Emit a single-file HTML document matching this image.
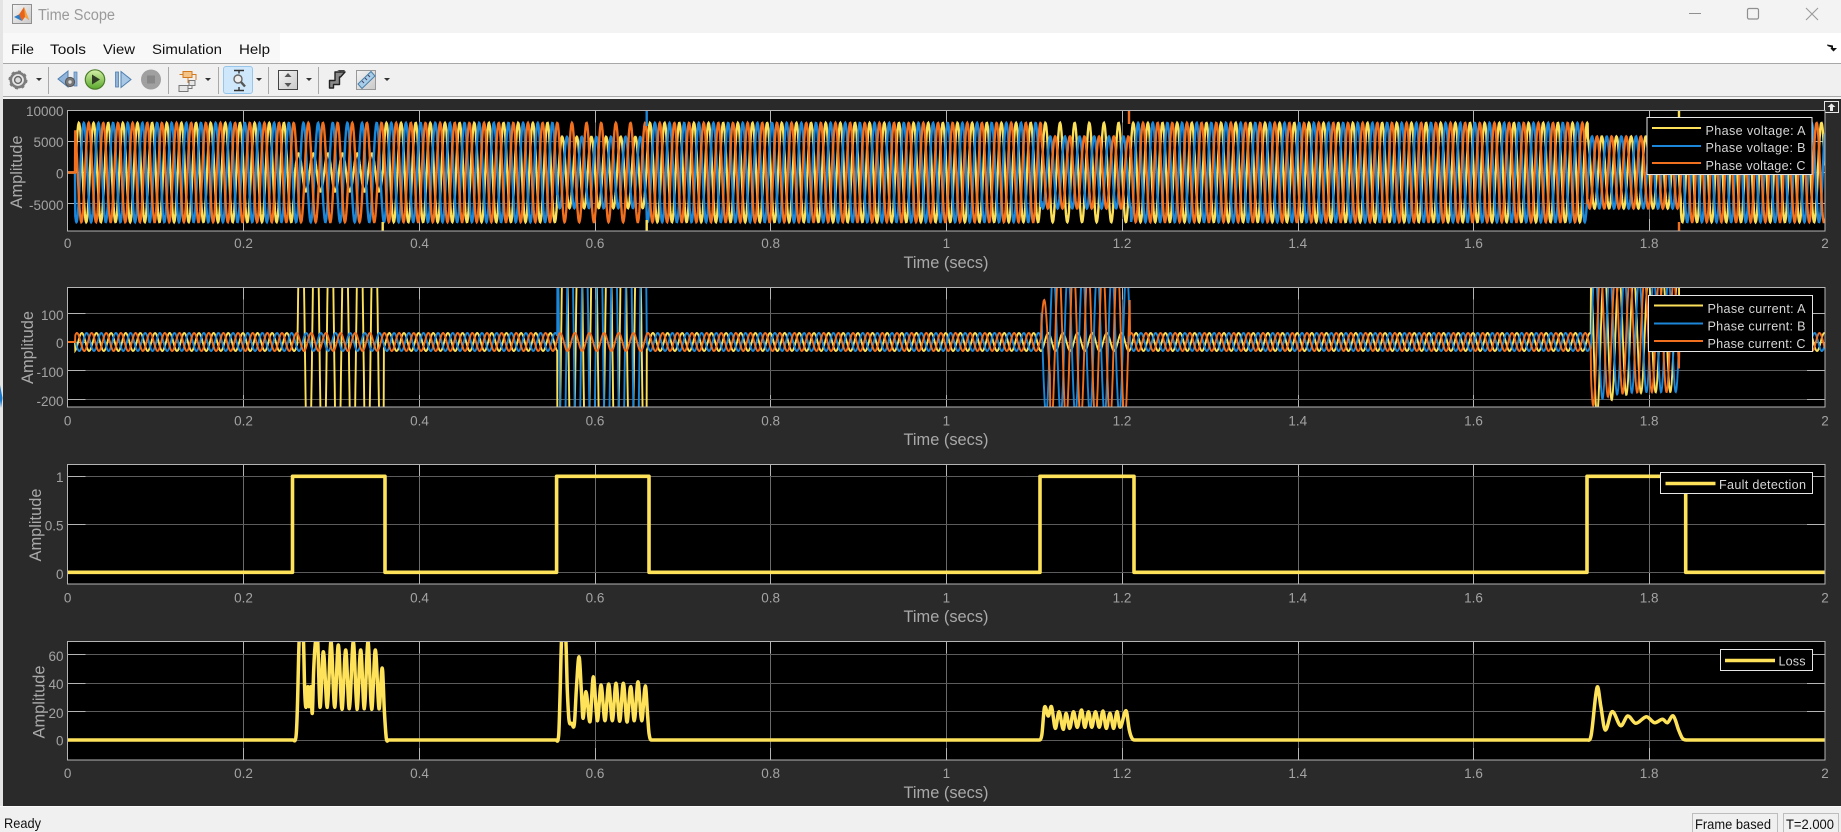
<!DOCTYPE html>
<html lang="en"><head><meta charset="utf-8"><title>Time Scope</title>
<style>
html,body{margin:0;padding:0;width:1841px;height:832px;overflow:hidden;background:#2a2a2a}
svg{display:block}
text{font-family:"Liberation Sans",Arial,sans-serif}
.t{fill:#a3a3a3;font-size:13.5px}
.e{text-anchor:end}.m{text-anchor:middle}
.l{fill:#a9a9a9;font-size:16.4px;text-anchor:middle}
.g{fill:#d6d6d6;font-size:12.6px}
.n{fill:#111;font-size:14px}
.b{filter:blur(.35px)}
</style></head><body>
<svg id="s" width="1841" height="832" viewBox="0 0 1841 832" xmlns="http://www.w3.org/2000/svg">
<defs>
<clipPath id="c1"><rect x="68" y="110" width="1757" height="121"/></clipPath>
<clipPath id="c2"><rect x="68" y="287" width="1757" height="120"/></clipPath>
<clipPath id="c3"><rect x="68" y="464" width="1757" height="120"/></clipPath>
<clipPath id="c4"><rect x="68" y="641" width="1757" height="119"/></clipPath>
<linearGradient id="gr" x1="0" y1="0" x2="0" y2="1"><stop offset="0" stop-color="#d6f0a8"/><stop offset="1" stop-color="#58a82a"/></linearGradient>
<linearGradient id="gi" x1="0" y1="0" x2="1" y2="1"><stop offset="0" stop-color="#f4f4f4"/><stop offset="1" stop-color="#c9c9c9"/></linearGradient>
</defs>

<!-- chrome -->
<rect width="1841" height="832" fill="#2a2a2a"/>
<rect width="1841" height="33" fill="#f3f3f3"/>
<rect y="33" width="1841" height="30" fill="#fff"/>
<rect y="33" width="280" height="30" fill="#f8f8f8"/>
<rect y="63" width="1841" height="1" fill="#a8a8a8"/>
<rect y="64" width="1841" height="32" fill="#f0f0f0"/>
<rect y="96" width="1841" height="1" fill="#a8a8a8"/>
<rect y="97" width="1841" height="2" fill="#f5f5f5"/>
<rect x="0" y="0" width="3" height="832" fill="#e4e4e4"/>
<path d="M0 385 L2.5 398 L1 408 L0 400Z" fill="#1c78c8"/>
<rect y="807" width="1841" height="25" fill="#f0f0f0"/>
<rect y="806" width="1841" height="1" fill="#fafafa"/>

<!-- matlab icon -->
<rect x="12.5" y="4.5" width="19" height="19" fill="url(#gi)" stroke="#8f8f8f"/>
<path d="M14 17 L19 14.5 L24 7 L29 20 L25 17 L22 21 L19 15.5Z" fill="#e8641c"/>
<path d="M14 17 L19 14.5 L22 21Z" fill="#2f7fc8"/>
<path d="M24 7 L29 20 L25 17Z" fill="#f5a33a"/>
<text x="38" y="20" font-size="15.4" fill="#9a9a9a" textLength="77" lengthAdjust="spacingAndGlyphs">Time Scope</text>

<!-- window controls -->
<rect x="1689" y="13" width="12" height="1" fill="#909090"/>
<rect x="1747.5" y="8.5" width="11" height="10.5" rx="1.5" fill="none" stroke="#8f8f8f" stroke-width="1.2"/>
<path d="M1806 8 L1818 20 M1818 8 L1806 20" stroke="#9a9a9a" stroke-width="1.1"/>

<!-- menu -->
<text class="n" x="11" y="54" textLength="23" lengthAdjust="spacingAndGlyphs">File</text>
<text class="n" x="50" y="54" textLength="36" lengthAdjust="spacingAndGlyphs">Tools</text>
<text class="n" x="103" y="54" textLength="32" lengthAdjust="spacingAndGlyphs">View</text>
<text class="n" x="152" y="54" textLength="70" lengthAdjust="spacingAndGlyphs">Simulation</text>
<text class="n" x="239" y="54" textLength="31" lengthAdjust="spacingAndGlyphs">Help</text>
<path d="M1827 44.5 L1833 45.5 L1833 48 L1837 48 L1833.5 51.5 L1830.5 48.5 L1831.5 47.5 L1827.5 46Z" fill="#111"/>

<!-- toolbar separators -->
<path d="M48.5 67V94M168.5 67V94M218.5 67V94M268.5 67V94M318.5 67V94" stroke="#a9a9a9"/>
<!-- dropdown arrows -->
<path d="M36 78h6l-3 3zM205 78h6l-3 3zM256 78h6l-3 3zM306 78h6l-3 3zM384 78h6l-3 3z" fill="#333"/>
<!-- gear -->
<circle cx="18" cy="80" r="7.2" fill="#e6e6e6" stroke="#7c7c7c" stroke-width="2.6"/>
<circle cx="18" cy="80" r="8.6" fill="none" stroke="#7c7c7c" stroke-width="1.8" stroke-dasharray="3 3.7"/>
<circle cx="18" cy="80" r="3.4" fill="#dcdcdc" stroke="#666" stroke-width="1.4"/>
<!-- step back -->
<path d="M58 79 L68 71 L68 87Z" fill="#8fb3d9" stroke="#4f7fb0"/>
<rect x="74" y="72" width="3" height="14" fill="#8fb3d9" stroke="#4f7fb0" stroke-width=".7"/>
<circle cx="70" cy="82" r="4.6" fill="#777" stroke="#555"/><circle cx="70" cy="82" r="1.7" fill="#ddd"/>
<!-- play -->
<circle cx="95" cy="79.5" r="9.7" fill="url(#gr)" stroke="#4b7d2a" stroke-width="1.2"/>
<path d="M92 74.5 L100 79.5 L92 84.5Z" fill="#2f3d24"/>
<!-- step forward -->
<rect x="115.5" y="72" width="3" height="15" fill="#8fb3d9" stroke="#4f7fb0" stroke-width=".8"/>
<path d="M121 71.5 L131 79.5 L121 87.5Z" fill="#a9c8e6" stroke="#4f7fb0"/>
<!-- stop -->
<circle cx="151" cy="79.5" r="10" fill="#a0a0a0"/>
<rect x="147" y="75.5" width="8" height="8" fill="#888"/>
<!-- blocks -->
<rect x="183" y="71.5" width="9" height="6" fill="#f3c486" stroke="#d27a20"/>
<path d="M179.5 74.5H183M192 74.5H196V80M188 78V83" stroke="#d27a20" fill="none"/>
<rect x="189" y="80.5" width="6" height="5" fill="#e6e6e6" stroke="#777"/>
<rect x="179" y="85.5" width="9" height="6" fill="#e6e6e6" stroke="#777"/>
<path d="M188 88.5H192V85.5" stroke="#777" fill="none"/>
<!-- active zoom button -->
<rect x="223.5" y="66.5" width="29" height="27" rx="2.5" fill="#cfe7fa" stroke="#97c6ea"/>
<path d="M234 70.5h10M234 90.5h10M239 70.5v3M239 87v3" stroke="#333" stroke-width="1.4"/>
<circle cx="238" cy="79" r="4" fill="#eee" stroke="#666" stroke-width="1.4"/>
<path d="M241 82 L245 86.5" stroke="#555" stroke-width="2.4"/>
<!-- scale axes -->
<rect x="278.5" y="70.5" width="19" height="19" fill="url(#gi)" stroke="#444"/>
<path d="M288 73 L284.5 77H291.5ZM288 87 L284.5 83H291.5Z" fill="#555"/>
<!-- step icon -->
<path d="M329.5 88V80.5H335V72H345L340.5 77H339.5V84.5H333.5V88Z" fill="#8a8a8a" stroke="#222" stroke-width="1.4" stroke-linejoin="round"/>
<path d="M337 70L345 70L343 73Z" fill="#444"/>
<!-- ruler -->
<rect x="356.5" y="70.5" width="19" height="19" fill="url(#gi)" stroke="#999"/>
<path d="M358 84 L371 71.5 L375 76 L362 88.5Z" fill="#a8cde9" stroke="#4a7fa8"/>
<path d="M362 81l2 2M365 78l2 2M368 75l2 2" stroke="#446"/>

<!-- maximize-axes icon -->
<rect x="1824.5" y="101.5" width="14" height="11" fill="#2a2a2a" stroke="#e8e8e8"/>
<path d="M1831.5 103.5 L1835.5 107H1833V111H1830V107H1827.5Z" fill="#e8e8e8"/>

<!-- axes backgrounds -->
<rect x="67.5" y="110.5" width="1757.5" height="120.5" fill="#000"/>
<rect x="67.5" y="287.5" width="1757.5" height="119.5" fill="#000"/>
<rect x="67.5" y="464.5" width="1757.5" height="119.5" fill="#000"/>
<rect x="67.5" y="641.5" width="1757.5" height="118.5" fill="#000"/>
<g id="grid"></g>
<g clip-path="url(#c1)"><g class="b" fill="none" stroke-width="2.4">
<path id="v1" stroke="#fde05a"/><path id="v2" stroke="#1c87d8"/><path id="v3" stroke="#f0701f"/>
<path d="M382.7 222V232M1679 110V122" stroke="#fde05a"/>
<path d="M646.7 110V126" stroke="#1c87d8"/><path d="M646.7 220V232" stroke="#fde05a"/>
<path d="M1129 110V124M1679 222V232" stroke="#f0701f"/>
</g></g>
<g clip-path="url(#c2)"><g class="b" fill="none" stroke-width="1.9">
<path id="i1" stroke="#fde05a"/><path id="i2" stroke="#1c87d8"/><path id="i3" stroke="#f0701f"/>
</g></g>
<g clip-path="url(#c3)"><g class="b" fill="none" stroke-width="3.6" stroke-linejoin="round">
<path d="M67.6 572.3H292.5V476.3H385V572.3H556.6V476.3H649V572.3H1040V476.3H1134V572.3H1587V476.3H1685.7V572.3H1826" stroke="#fde25a"/>
</g></g>
<g clip-path="url(#c4)"><g class="b" fill="none" stroke-width="3.5" stroke-linejoin="round">
<path id="loss" stroke="#fde25a"/>
</g></g>

<!-- axis boxes -->
<g fill="none" stroke="#b4b4b4">
<rect x="67.5" y="110.5" width="1757.5" height="120.5"/>
<rect x="67.5" y="287.5" width="1757.5" height="119.5"/>
<rect x="67.5" y="464.5" width="1757.5" height="119.5"/>
<rect x="67.5" y="641.5" width="1757.5" height="118.5"/>
</g>

<!-- legends -->
<rect x="1647" y="117.5" width="165" height="57" fill="#000" stroke="#e6e6e6"/>
<path d="M1652 128H1701" stroke="#fde05a" stroke-width="1.9"/><path d="M1652 146H1701" stroke="#1c87d8" stroke-width="1.9"/><path d="M1652 163H1701" stroke="#f0701f" stroke-width="1.9"/>
<text class="g" x="1705.5" y="135" textLength="100" lengthAdjust="spacing">Phase voltage: A</text>
<text class="g" x="1705.5" y="152" textLength="100" lengthAdjust="spacing">Phase voltage: B</text>
<text class="g" x="1705.5" y="170" textLength="100" lengthAdjust="spacing">Phase voltage: C</text>

<rect x="1648.5" y="295.5" width="164" height="56" fill="#000" stroke="#e6e6e6"/>
<path d="M1654 305.5H1703" stroke="#fde05a" stroke-width="1.9"/><path d="M1654 323.5H1703" stroke="#1c87d8" stroke-width="1.9"/><path d="M1654 341H1703" stroke="#f0701f" stroke-width="1.9"/>
<text class="g" x="1707.5" y="313" textLength="98" lengthAdjust="spacing">Phase current: A</text>
<text class="g" x="1707.5" y="330.5" textLength="98" lengthAdjust="spacing">Phase current: B</text>
<text class="g" x="1707.5" y="348" textLength="98" lengthAdjust="spacing">Phase current: C</text>

<rect x="1660.5" y="472.5" width="152" height="21" fill="#000" stroke="#e6e6e6"/>
<path d="M1665.5 483.5H1715.5" stroke="#fde25a" stroke-width="3.4"/>
<text class="g" x="1719" y="489" textLength="87" lengthAdjust="spacing">Fault detection</text>

<rect x="1720.5" y="649.5" width="92" height="21" fill="#000" stroke="#e6e6e6"/>
<path d="M1725 660.5H1775" stroke="#fde25a" stroke-width="3.4"/>
<text class="g" x="1778.5" y="665.5" textLength="27" lengthAdjust="spacing">Loss</text>

<!-- y tick labels -->
<text class="t e" x="63.5" y="116">10000</text><text class="t e" x="63.5" y="147">5000</text><text class="t e" x="63.5" y="178.5">0</text><text class="t e" x="63.5" y="210">-5000</text>
<text class="t e" x="63.5" y="320">100</text><text class="t e" x="63.5" y="348">0</text><text class="t e" x="63.5" y="377">-100</text><text class="t e" x="63.5" y="406">-200</text>
<text class="t e" x="63.5" y="482">1</text><text class="t e" x="63.5" y="530.5">0.5</text><text class="t e" x="63.5" y="579">0</text>
<text class="t e" x="63.5" y="661">60</text><text class="t e" x="63.5" y="689">40</text><text class="t e" x="63.5" y="718">20</text><text class="t e" x="63.5" y="745.5">0</text>

<!-- y axis titles -->
<text class="l" transform="translate(22 172) rotate(-90)">Amplitude</text>
<text class="l" transform="translate(33 347.5) rotate(-90)">Amplitude</text>
<text class="l" transform="translate(41 525) rotate(-90)">Amplitude</text>
<text class="l" transform="translate(44.5 702) rotate(-90)">Amplitude</text>

<!-- x tick labels -->
<g class="t m" text-anchor="middle">
<text x="67.6" y="248">0</text><text x="243.5" y="248">0.2</text><text x="419.5" y="248">0.4</text><text x="595" y="248">0.6</text><text x="770.7" y="248">0.8</text><text x="946.4" y="248">1</text><text x="1122" y="248">1.2</text><text x="1297.8" y="248">1.4</text><text x="1473.5" y="248">1.6</text><text x="1649.2" y="248">1.8</text><text x="1825" y="248">2</text>
<text x="67.6" y="425.5">0</text><text x="243.5" y="425.5">0.2</text><text x="419.5" y="425.5">0.4</text><text x="595" y="425.5">0.6</text><text x="770.7" y="425.5">0.8</text><text x="946.4" y="425.5">1</text><text x="1122" y="425.5">1.2</text><text x="1297.8" y="425.5">1.4</text><text x="1473.5" y="425.5">1.6</text><text x="1649.2" y="425.5">1.8</text><text x="1825" y="425.5">2</text>
<text x="67.6" y="602.5">0</text><text x="243.5" y="602.5">0.2</text><text x="419.5" y="602.5">0.4</text><text x="595" y="602.5">0.6</text><text x="770.7" y="602.5">0.8</text><text x="946.4" y="602.5">1</text><text x="1122" y="602.5">1.2</text><text x="1297.8" y="602.5">1.4</text><text x="1473.5" y="602.5">1.6</text><text x="1649.2" y="602.5">1.8</text><text x="1825" y="602.5">2</text>
<text x="67.6" y="778">0</text><text x="243.5" y="778">0.2</text><text x="419.5" y="778">0.4</text><text x="595" y="778">0.6</text><text x="770.7" y="778">0.8</text><text x="946.4" y="778">1</text><text x="1122" y="778">1.2</text><text x="1297.8" y="778">1.4</text><text x="1473.5" y="778">1.6</text><text x="1649.2" y="778">1.8</text><text x="1825" y="778">2</text>
</g>

<!-- x axis titles -->
<text class="l" x="946" y="268">Time (secs)</text>
<text class="l" x="946" y="445">Time (secs)</text>
<text class="l" x="946" y="622">Time (secs)</text>
<text class="l" x="946" y="798">Time (secs)</text>

<!-- status bar -->
<text x="4" y="828" font-size="14" fill="#111" textLength="37" lengthAdjust="spacingAndGlyphs">Ready</text>
<rect x="1692.5" y="813.5" width="85" height="19" fill="#f0f0f0" stroke="#bdbdbd"/>
<rect x="1783.5" y="813.5" width="55" height="19" fill="#f0f0f0" stroke="#bdbdbd"/>
<text x="1695" y="829" font-size="14" fill="#111" textLength="76" lengthAdjust="spacingAndGlyphs">Frame based</text>
<text x="1786" y="829" font-size="14" fill="#111" textLength="48" lengthAdjust="spacingAndGlyphs">T=2.000</text>
</svg>
<script>
(function(){
var NS="http://www.w3.org/2000/svg";
var X0=67.6,XS=878.6;
function sx(t){return X0+t*XS}
function wave(t,ph){return Math.cos(2*Math.PI*(60*t-ph))}
function inn(t,a,b){return t>=a&&t<b}
function build(fn){
  var d=[],t;
  for(t=0;t<=2.0001;t+=0.0004){d.push((d.length?"L":"M")+sx(t).toFixed(1)+" "+fn(t).toFixed(1))}
  return d.join("");
}
var F1=[.2585,.3595],F2=[.5575,.659],F3=[1.108,1.21],F4=[1.73,1.836];
function V(idx,ph){
  return function(t){
    if(t<.0085)return 172.5;
    var a=49.6;
    if(inn(t,F1[0],F1[1])&&idx==0)a=19;
    if(inn(t,F2[0],F2[1])&&idx<2)a=35.7;
    if(inn(t,F3[0],F3[1])&&idx>0)a=36;
    if(inn(t,F4[0],F4[1]))a=36;
    return 172.5-a*wave(t,ph);
  };
}
document.getElementById("v1").setAttribute("d",build(V(0,.773)));
document.getElementById("v2").setAttribute("d",build(V(1,.107)));
document.getElementById("v3").setAttribute("d",build(V(2,.44)));
function I(idx,ph,fph){
  return function(t){
    if(t<.0085)return 342;
    var a=9,off=0,p=ph;
    if(inn(t,.2617,.36)&&idx==0){a=170;p=fph}
    if(inn(t,.5575,.659)&&idx<2){a=170;p=fph}
    if(inn(t,1.108,1.209)&&idx>0){a=idx==2?(t<1.118?42:80):73;p=fph}
    if(inn(t,1.7336,1.834)){a=57+(idx==0?36:16)*Math.exp(-(t-1.7336)/.016);off=7;p=fph}
    return 342-off-a*wave(t,p);
  };
}
document.getElementById("i1").setAttribute("d",build(I(0,.97,.95)));
document.getElementById("i2").setAttribute("d",build(I(1,.30,.32)));
document.getElementById("i3").setAttribute("d",build(I(2,.64,.69)));

/* grid */
var g=document.getElementById("grid");
function line(x1,y1,x2,y2,c){
  var l=document.createElementNS(NS,"line");
  l.setAttribute("x1",x1);l.setAttribute("y1",y1);l.setAttribute("x2",x2);l.setAttribute("y2",y2);l.setAttribute("stroke",c);
  g.appendChild(l);
}
var panels=[[110.5,231,[141.5,172.5,203.5]],[287.5,407,[313.5,342.5,370.5,399.5]],[464.5,584,[476.5,524.5,572.5]],[641.5,760,[654.5,683.5,711.5,740.5]]];
panels.forEach(function(p){
  var k,x;
  for(k=1;k<10;k++){
    x=Math.round(X0+k*175.72)+.5;
    line(x,p[0],x,p[1],"#6a6a6a");
    line(x,p[0],x,p[0]+12,"#b4b4b4");
    line(x,p[1]-12,x,p[1],"#b4b4b4");
  }
  p[2].forEach(function(y){
    line(67.5,y,1825,y,"#5c5c5c");
    line(67.5,y,85.5,y,"#b4b4b4");
    line(1807,y,1825,y,"#b4b4b4");
  });
});
line(67.5,110.5,85.5,110.5,"#c8c8c8");

/* loss curve, smoothed with x-monotone Hermite segments */
function m1(a,x0,sxx){var r=[];for(var i=0;i<a.length;i+=2){r.push([x0+a[i]/sxx,630+a[i+1]/3])}return r}
var pts=[[67.6,740]];
pts=pts.concat(m1([70,330,78,320,82,240,88,20,100,20,104,180,108,232,113,170,117,230,122,170,127,250,131,120,137,30,143,30,150,232,160,65,172,232,183,35,194,232,205,45,216,238,227,60,238,236,250,35,261,238,272,60,283,236,294,35,305,238,316,60,327,236,335,122,338,125,343,240,349,325,355,330],270,3));
pts=pts.concat(m1([858,330,866,315,870,200,875,20,887,20,892,180,897,270,905,280,913,283,919,180,927,80,934,180,939,265,948,185,960,275,970,140,982,272,993,165,1005,272,1016,162,1027,272,1038,160,1049,274,1060,160,1071,276,1082,170,1093,272,1104,155,1115,272,1126,168,1133,260,1137,310,1143,330],270,3));
pts=pts.concat(m1([72,330,78,315,83,232,90,258,96,230,103,295,110,245,118,298,123,250,130,295,137,245,144,292,152,240,158,292,165,245,171,292,178,245,185,292,192,243,198,295,205,250,212,295,218,245,224,292,235,242,241,300,246,325,252,330],1000,1.864));
pts=pts.concat(m1([1095,330,1102,315,1113,172,1120,230,1128,300,1141,245,1157,287,1170,258,1185,280,1205,260,1220,278,1235,268,1244,278,1255,258,1265,300,1272,325,1280,330],1000,1.864));
pts.push([1826,740]);
function slope(i){
  if(pts[i][1]>=739.9)return 0;
  var a=pts[Math.max(i-1,0)],b=pts[Math.min(i+1,pts.length-1)];
  return (b[1]-a[1])/(b[0]-a[0]);
}
var d="M"+pts[0][0]+" "+pts[0][1];
for(var i=0;i<pts.length-1;i++){
  var p=pts[i],q=pts[i+1],dx=(q[0]-p[0])/3;
  d+="C"+(p[0]+dx).toFixed(1)+" "+(p[1]+slope(i)*dx).toFixed(1)+" "+(q[0]-dx).toFixed(1)+" "+(q[1]-slope(i+1)*dx).toFixed(1)+" "+q[0].toFixed(1)+" "+q[1].toFixed(1);
}
document.getElementById("loss").setAttribute("d",d);
})();
</script>
</body></html>
